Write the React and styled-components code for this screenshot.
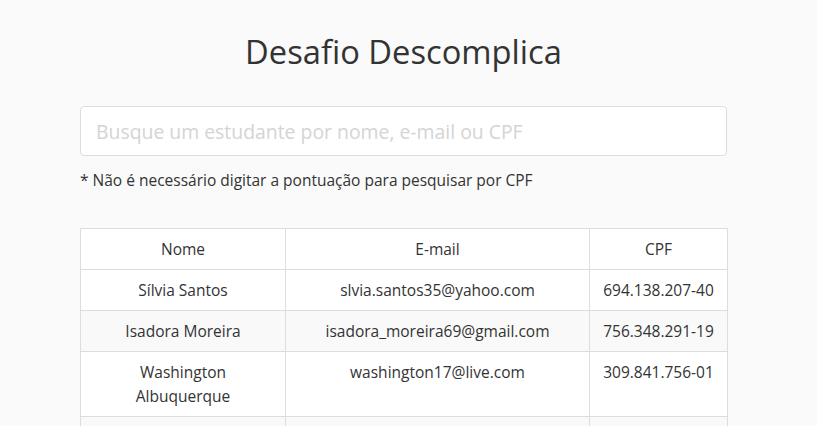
import React, { useState } from 'react';
import styled, { createGlobalStyle } from 'styled-components';

const students = [
    { id: 1, name: 'Sílvia Santos', email: 'slvia.santos35@yahoo.com', cpf: '694.138.207-40' },
    { id: 2, name: 'Isadora Moreira', email: 'isadora_moreira69@gmail.com', cpf: '756.348.291-19' },
    { id: 3, name: 'Washington Albuquerque', email: 'washington17@live.com', cpf: '309.841.756-01' },
    { id: 4, name: 'Bruna Carvalho', email: 'bruna.carvalho@hotmail.com', cpf: '128.573.904-62' },
];

const App = () => {
    const [search, setSearch] = useState('');

    return (<Page>
        <GlobalStyle />
        <Title>Desafio Descomplica</Title>
        <SearchInput
            value={search}
            onChange={e => setSearch(e.target.value)}
            placeholder="Busque um estudante por nome, e-mail ou CPF"
        />
        <Hint>* Não é necessário digitar a pontuação para pesquisar por CPF</Hint>
        <Table>
            <colgroup>
                <col style={{ width: 205 }} />
                <col style={{ width: 304 }} />
                <col style={{ width: 138 }} />
            </colgroup>
            <thead>
                <tr>
                    <HeadCell>Nome</HeadCell>
                    <HeadCell>E-mail</HeadCell>
                    <HeadCell>CPF</HeadCell>
                </tr>
            </thead>
            <tbody>
                {
                    students.map(student => {
                        return <Row key={student.id}>
                            <Cell>{student.name}</Cell>
                            <Cell>{student.email}</Cell>
                            <Cell>{student.cpf}</Cell>
                        </Row>
                    })
                }
            </tbody>
        </Table>
    </Page>);
}

export default App;

const GlobalStyle = createGlobalStyle`
    html, body {
        margin: 0;
        background: #fafafa;
    }
    body {
        padding-right: 10px;
        font-family: "Open Sans", "Noto Sans", sans-serif;
        color: #333;
    }
`

const Page = styled.div`
    width: 647px;
    margin: 0 auto;
    padding: 30px 0 40px;
`

const Title = styled.h1`
    margin: 0 0 32px;
    font-size: 32.7px;
    font-weight: 500;
    line-height: 44px;
    text-align: center;
    color: #333;
`

const SearchInput = styled.input`
    display: block;
    box-sizing: border-box;
    width: 100%;
    height: 50px;
    padding: 0 15px;
    border: 1px solid #ddd;
    border-radius: 4px;
    background: #fff;
    font-family: inherit;
    font-size: 19.4px;
    color: #333;
    outline: none;

    &::placeholder {
        color: #d4d4d4;
    }
`

const Hint = styled.p`
    margin: 13px 0 37px;
    font-size: 15.5px;
    line-height: 22px;
`

const Table = styled.table`
    width: 100%;
    table-layout: fixed;
    border-collapse: collapse;
    background: #fff;
    font-size: 15.5px;
`

const HeadCell = styled.th`
    border: 1px solid #ddd;
    padding: 8px 12px;
    line-height: 24px;
    font-weight: 500;
    text-align: center;
`

const Row = styled.tr`
    &:nth-child(even) {
        background: #f9f9f9;
    }
`

const Cell = styled.td`
    border: 1px solid #ddd;
    padding: 8px 12px;
    line-height: 24px;
    text-align: center;
    vertical-align: top;
`
